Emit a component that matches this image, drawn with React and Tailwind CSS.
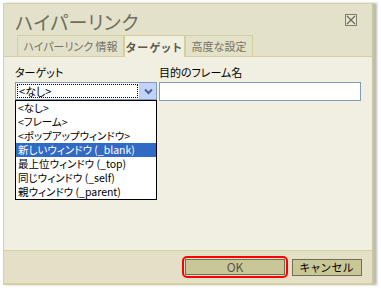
import React from 'react';

const font = {
  fontFamily: '"Noto Sans CJK JP", "Noto Sans", sans-serif',
  fontFeatureSettings: '"palt"',
};

const options = [
  { label: '<なし>' },
  { label: '<フレーム>' },
  { label: '<ポップアップウィンドウ>' },
  { label: '新しいウィンドウ (_blank)', active: true },
  { label: '最上位ウィンドウ (_top)' },
  { label: '同じウィンドウ (_self)' },
  { label: '親ウィンドウ (_parent)' },
];

const Tab = ({ label, active, width }) => (
  <div
    className={
      active
        ? 'h-[22px] border border-b-0 border-[#d3d09c] bg-[#f0efe2] flex items-center justify-center text-[11px] leading-[14px] font-bold tracking-[1.5px] text-[#5c5c48] whitespace-nowrap -mb-px relative z-10'
        : 'h-[21px] border border-b-0 border-[#d3d09c] bg-[#e3e1c9] flex items-center justify-center text-[11px] leading-[14px] text-[#737363] whitespace-nowrap'
    }
    style={{ width }}
  >
    {label}
  </div>
);

const App = () => {
  return (
    <div className="w-[381px] h-[290px] bg-white overflow-hidden" style={font}>
      <div className="ml-[3px] mt-[3px] w-[371px] h-[282px] flex flex-col border-t border-l border-r-2 border-[#d6d3a3] border-r-[#c9c69b] shadow-[3px_0_2px_rgba(120,120,110,0.5)] relative">
        {/* header */}
        <div className="h-[53px] bg-[#e3e1c9] flex flex-col">
          <div className="flex justify-between items-start">
            <div className="pl-[11px] pt-[6px] text-[19px] leading-[24px] text-[#6e6e60] tracking-[0.5px] whitespace-nowrap">ハイパーリンク</div>
            <div className="mt-[10px] mr-[15px] w-[12px] h-[12px] border border-[#7c7c6a] bg-[#e9e7d2] flex items-center justify-center">
              <svg width="10" height="10" viewBox="0 0 10 10">
                <path d="M1 1 L9 9 M9 1 L1 9" stroke="#6a6a5a" strokeWidth="1.2" />
              </svg>
            </div>
          </div>
          <div className="mt-auto flex items-end pl-[13px] border-b border-[#d3d09c]">
            <Tab label="ハイパーリンク 情報" width={107} />
            <Tab label="ターゲット" width={61} active />
            <Tab label="高度な設定" width={68} />
          </div>
        </div>

        {/* content */}
        <div className="flex-1 bg-[#f0efe2] relative px-[11px] pt-[7px]">
          <div className="flex gap-[2px]">
            <div className="w-[142px] flex flex-col">
              <div className="text-[11px] leading-[16px] text-black whitespace-nowrap">ターゲット</div>
              <div className="mt-[2px] h-[18px] border border-[#7f9db9] bg-white flex items-center">
                <div className="flex-1 h-full p-[1px]">
                  <div className="h-full border border-dotted border-black flex items-center pl-[1px] text-[11px] leading-[12px] text-black whitespace-nowrap">
                    &lt;なし&gt;
                  </div>
                </div>
                <div className="w-[17px] h-full bg-[#c1d3fb] border-l border-[#b9cdf6] flex items-center justify-center">
                  <svg width="9" height="7" viewBox="0 0 9 7">
                    <path d="M1 1.5 L4.5 5 L8 1.5" stroke="#4d6185" strokeWidth="2" fill="none" />
                  </svg>
                </div>
              </div>
            </div>
            <div className="flex-1 flex flex-col">
              <div className="text-[11px] leading-[16px] text-black whitespace-nowrap">目的のフレーム名</div>
              <div className="mt-[2px] w-[202px] h-[19px] border border-[#7f9db9] bg-white"></div>
            </div>
          </div>

          {/* open dropdown list */}
          <div className="absolute left-[11px] top-[43px] w-[142px] border border-black bg-white z-20">
            {options.map((o) => (
              <div
                key={o.label}
                className={
                  o.active
                    ? 'h-[14px] flex items-start leading-[13px] pl-[2px] text-[10.5px] bg-[#316ac5] text-white whitespace-nowrap'
                    : 'h-[14px] flex items-start leading-[13px] pl-[2px] text-[10.5px] text-black whitespace-nowrap'
                }
              >
                {o.label}
              </div>
            ))}
          </div>
        </div>

        {/* footer */}
        <div className="h-[35px] bg-[#e3e0c7] border-t border-[#d6d29f] border-b-2 border-b-[#d6d29f] flex items-center justify-end pr-[10px] gap-[4px]">
          <div className="p-[1px] border-2 border-[#ff0000] rounded-[5px]">
            <button className="block w-[100px] h-[16px] bg-[#c9c698] border border-[#6f6f55] text-[12px] leading-[14px] text-[#55554a]">
              OK
            </button>
          </div>
          <button className="block w-[70px] h-[17px] bg-[#c9c698] border border-[#6f6f55] text-[11px] leading-[14px] tracking-[1px] text-black whitespace-nowrap">
            キャンセル
          </button>
        </div>
      </div>
    </div>
  );
};

export default App;
